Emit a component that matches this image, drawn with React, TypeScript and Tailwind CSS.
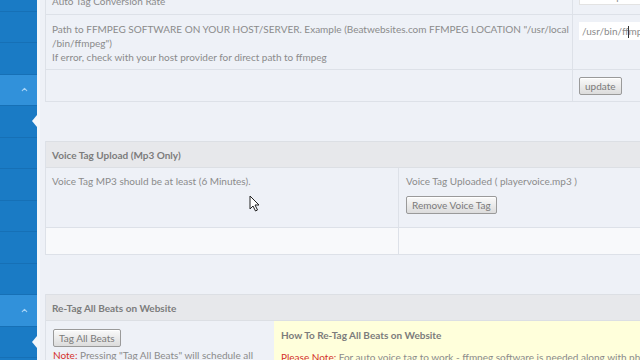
import { ChevronUp } from 'lucide-react';

const navItems = [
  { open: false, active: false },
  { open: false, active: false },
  { open: false, active: false },
  { open: true, active: false },
  { open: false, active: true },
  { open: false, active: false },
  { open: false, active: false },
  { open: false, active: false },
  { open: false, active: false },
  { open: false, active: false },
  { open: true, active: false },
  { open: false, active: true },
  { open: false, active: false },
];

function Btn({ children }: { children: React.ReactNode }) {
  return (
    <button className="block h-[18px] px-[5px] rounded-[2px] border border-[#9a9a9a] bg-gradient-to-b from-[#fafafa] to-[#dcdcdc] text-[10px] leading-none text-[#7a7a7a] shadow-[inset_0_1px_0_#fff]">
      {children}
    </button>
  );
}

export default function App() {
  return (
    <div className="relative flex h-[360px] w-[640px] overflow-hidden bg-[#eef1f7] font-['Lato',sans-serif] text-[10px] leading-[14px] text-[#8b8b8b]">
      {/* Sidebar */}
      <aside className="w-[37px] shrink-0 bg-[#1a7bc5] -mt-[20px] flex flex-col">
        {navItems.map((item, i) => (
          <div
            key={i}
            className={`relative h-[31.5px] shrink-0 border-b border-[#1670b6] flex items-center justify-end pr-[8px] ${
              item.open ? 'bg-[#3191da]' : ''
            }`}
          >
            {item.open && <ChevronUp size={9} strokeWidth={3} className="text-[#a8d4f6]" />}
            {item.active && (
              <span className="absolute right-0 top-1/2 -translate-y-1/2 w-0 h-0 border-y-[6px] border-y-transparent border-r-[5px] border-r-[#f3f7fb]" />
            )}
          </div>
        ))}
      </aside>
      <div className="w-[3px] shrink-0 bg-[#f3f7fb]" />

      {/* Main */}
      <main className="flex-1 pl-[5px] -mt-[13px]">
        <div className="w-[660px]">
          {/* Settings table */}
          <div className="grid grid-cols-[527px_1fr] border-l border-[#dde1e8]">
            <div className="h-[28px] px-[6px] pt-[7px] border-b border-r border-[#dde1e8]">Auto Tag Conversion Rate</div>
            <div className="h-[28px] px-[6px] border-b border-[#dde1e8]">
              <div className="h-[18px] w-[80px] bg-white border border-[#e3e3e3] px-[4px] leading-[16px] whitespace-nowrap overflow-hidden">128 Kbps bit rate</div>
            </div>

            <div className="h-[55px] px-[6px] pt-[7px] border-b border-r border-[#dde1e8]">
              <p className="whitespace-nowrap">Path to FFMPEG SOFTWARE ON YOUR HOST/SERVER. Example (Beatwebsites.com FFMPEG LOCATION "/usr/local</p>
              <p>/bin/ffmpeg")</p>
              <p>If error, check with your host provider for direct path to ffmpeg</p>
            </div>
            <div className="h-[55px] px-[6px] pt-[7px] border-b border-[#dde1e8]">
              <div className="h-[18px] w-[80px] bg-white px-[3px] leading-[18px] whitespace-nowrap overflow-hidden text-[#8b8b8b]">
                /usr/bin/ff<span className="inline-block w-px h-[12px] bg-[#333] align-middle -mx-[0.5px]" />mpeg
              </div>
            </div>

            <div className="h-[32px] border-b border-r border-[#dde1e8]" />
            <div className="h-[32px] px-[6px] pt-[7px] border-b border-[#dde1e8]">
              <Btn>update</Btn>
            </div>
          </div>

          {/* Voice tag card */}
          <div className="mt-[39px] border-l border-[#dde1e8]">
            <div className="h-[27px] bg-[#e7e8eb] border-y border-[#dcdfe4] px-[6px] flex items-center font-bold text-[#7c7c7c]">
              Voice Tag Upload (Mp3 Only)
            </div>
            <div className="grid grid-cols-[353px_1fr]">
              <div className="h-[60px] px-[6px] pt-[6px] border-r border-b border-[#dde1e8]">
                Voice Tag MP3 should be at least (6 Minutes).
              </div>
              <div className="h-[60px] px-[7px] pt-[6px] border-b border-[#dde1e8]">
                <p>Voice Tag Uploaded ( playervoice.mp3 )</p>
                <div className="mt-[8px]">
                  <Btn>Remove Voice Tag</Btn>
                </div>
              </div>
              <div className="h-[27px] bg-[#f8f9fb] border-r border-b border-[#dde1e8]" />
              <div className="h-[27px] bg-[#f8f9fb] border-b border-[#dde1e8]" />
            </div>
          </div>

          {/* Re-tag card */}
          <div className="mt-[39px] border-l border-[#dde1e8]">
            <div className="h-[27px] bg-[#e7e8eb] border-y border-[#dcdfe4] px-[6px] flex items-center font-bold text-[#7c7c7c]">
              Re-Tag All Beats on Website
            </div>
            <div className="grid grid-cols-[228px_1fr]">
              <div className="px-[7px] pt-[8px] h-[60px] overflow-hidden">
                <Btn>Tag All Beats</Btn>
                <p className="mt-[1px]">
                  <span className="text-[#d3322c]">Note:</span> Pressing "Tag All Beats" will schedule all beats to be re-tagged
                </p>
              </div>
              <div className="bg-[#ffffdb] px-[7px] pt-[7px] h-[60px]">
                <p className="font-bold text-[#7c7c7c]">How To Re-Tag All Beats on Website</p>
                <p className="mt-[8px] whitespace-nowrap">
                  <span className="text-[#d3322c]">Please Note:</span> For auto voice tag to work - ffmpeg software is needed along with php
                </p>
              </div>
            </div>
          </div>
        </div>
      </main>

      {/* Mouse cursor */}
      <svg className="absolute left-[249px] top-[195px]" width="11" height="17" viewBox="0 0 11 17">
        <path d="M1 1 L1 14 L4 11 L6.5 16 L8.5 15 L6 10 L10 10 Z" fill="#fff" stroke="#222" strokeWidth="1" strokeLinejoin="round" />
      </svg>
    </div>
  );
}
